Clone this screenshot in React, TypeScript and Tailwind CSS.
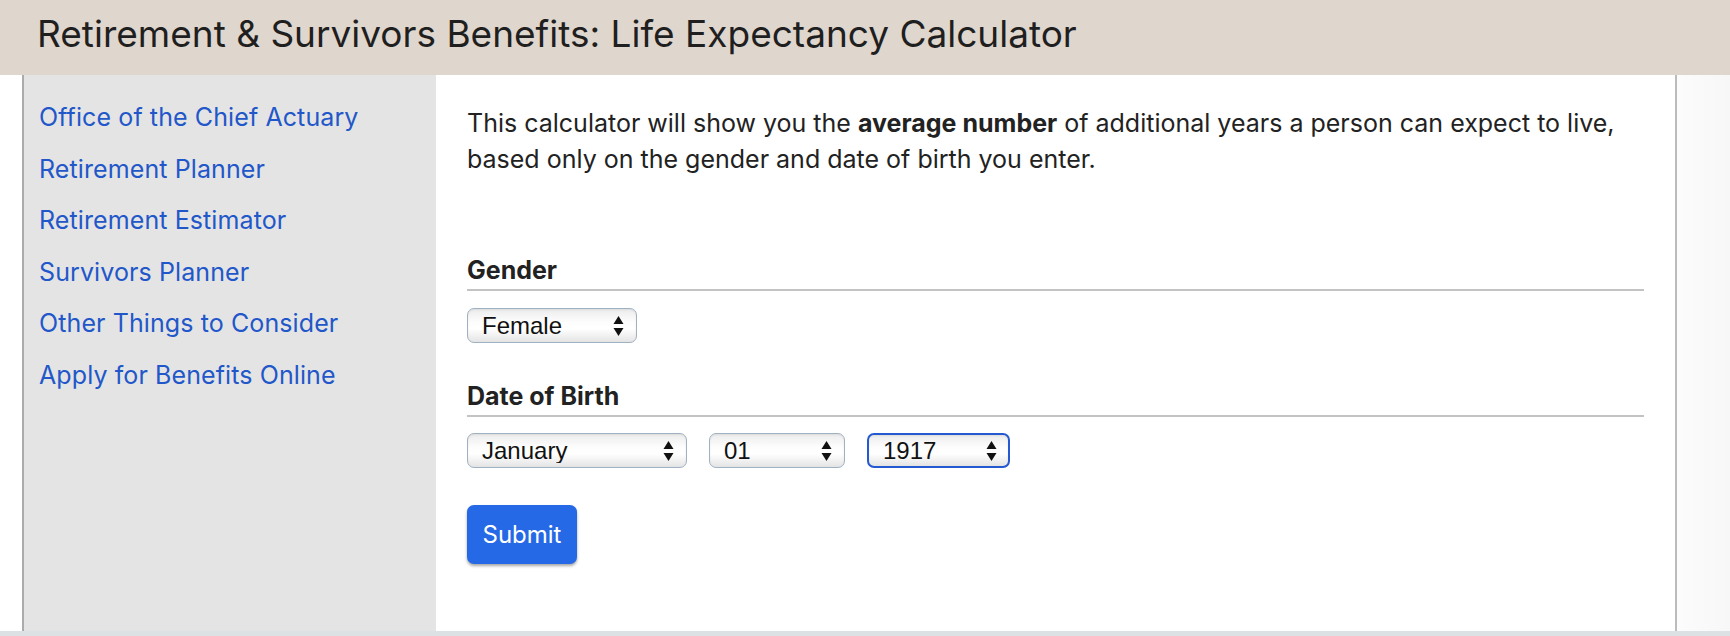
const links = [
  'Office of the Chief Actuary',
  'Retirement Planner',
  'Retirement Estimator',
  'Survivors Planner',
  'Other Things to Consider',
  'Apply for Benefits Online',
]

const months = ['January', 'February', 'March', 'April', 'May', 'June', 'July', 'August', 'September', 'October', 'November', 'December']
const days = Array.from({ length: 31 }, (_, i) => String(i + 1).padStart(2, '0'))
const years = Array.from({ length: 101 }, (_, i) => String(1917 + i))

function Arrows() {
  return (
    <svg width="11" height="21" viewBox="0 0 11 21" className="pointer-events-none absolute right-[13px] top-1/2 -translate-y-1/2">
      <path d="M5.5 0.5 L10.5 8.5 H0.5 Z" fill="#111" />
      <path d="M5.5 20.5 L10.5 12.5 H0.5 Z" fill="#111" />
    </svg>
  )
}

interface SelectProps {
  width: string
  value: string
  options: string[]
  focused?: boolean
}

function MacSelect({ width, value, options, focused }: SelectProps) {
  return (
    <div className={`relative h-[35px] ${width}`}>
      <select
        defaultValue={value}
        className={`h-full w-full appearance-none rounded-[7px] bg-[linear-gradient(#ececec,#fdfdfd_40%,#ffffff_60%,#e4e4e4)] pl-[14px] text-[24px] leading-none text-[#111] shadow-[inset_0_1px_2px_rgba(0,0,0,0.08)] outline-none font-['Liberation_Sans',Arial,sans-serif] ${
          focused ? 'border-2 border-[#2459d1] pl-[13px]' : 'border-[1.5px] border-[#9fb1c4]'
        }`}
      >
        {options.map((o) => (
          <option key={o}>{o}</option>
        ))}
      </select>
      <Arrows />
    </div>
  )
}

export default function App() {
  return (
    <div className="flex h-[636px] w-full flex-col overflow-hidden bg-white font-['Inter',sans-serif] text-[#222]">
      {/* page title bar */}
      <header className="h-[75px] shrink-0 bg-[#dfd6cd] pl-[37px] pt-[11px]">
        <h1 className="text-[37px] leading-[45px] font-normal text-[#1f1f1f]">
          Retirement &amp; Survivors Benefits: Life Expectancy Calculator
        </h1>
      </header>

      <div className="flex min-h-0 flex-1">
        <div className="w-[22px] shrink-0 bg-white" />

        {/* left nav */}
        <nav className="w-[414px] shrink-0 border-l-2 border-[#ababab] bg-[#e4e4e4] pl-[15px] pt-[17px]">
          <ul>
            {links.map((l) => (
              <li key={l} className="text-[25px] leading-[51.5px] tracking-[0.1px]">
                <a href="#" className="text-[#2257c9]">
                  {l}
                </a>
              </li>
            ))}
          </ul>
        </nav>

        {/* calculator */}
        <main className="w-[1239px] shrink-0 pl-[31px] pr-[31px] pt-[30px]">
          <p className="text-[25px] leading-[36px]">
            This calculator will show you the <strong className="font-bold">average number</strong> of additional years a person can expect to live,
            <br />
            based only on the gender and date of birth you enter.
          </p>

          <form onSubmit={(e) => e.preventDefault()}>
            <h2 className="mt-[78px] border-b-2 border-[#c3c3c3] pb-[4px] text-[25px] leading-[30px] font-bold">Gender</h2>
            <div className="mt-[17px]">
              <MacSelect width="w-[170px]" value="Female" options={['Female', 'Male']} />
            </div>

            <h2 className="mt-[38px] border-b-2 border-[#c3c3c3] pb-[4px] text-[25px] leading-[30px] font-bold">Date of Birth</h2>
            <div className="mt-[16px] flex gap-[22px]">
              <MacSelect width="w-[220px]" value="January" options={months} />
              <MacSelect width="w-[136px]" value="01" options={days} />
              <MacSelect width="w-[143px]" value="1917" options={years} focused />
            </div>

            <button
              type="submit"
              className="mt-[37px] h-[59px] w-[110px] rounded-[7px] bg-[#2669e6] text-[24px] text-white shadow-[0_2px_3px_rgba(0,0,0,0.35)]"
            >
              Submit
            </button>
          </form>
        </main>

        <div className="flex-1 border-l-2 border-[#bcbcbc] bg-[linear-gradient(90deg,#fcfcfc,#f7f7f7)]" />
      </div>

      <div className="h-[5px] shrink-0 bg-[#dce1e4]" />
    </div>
  )
}
